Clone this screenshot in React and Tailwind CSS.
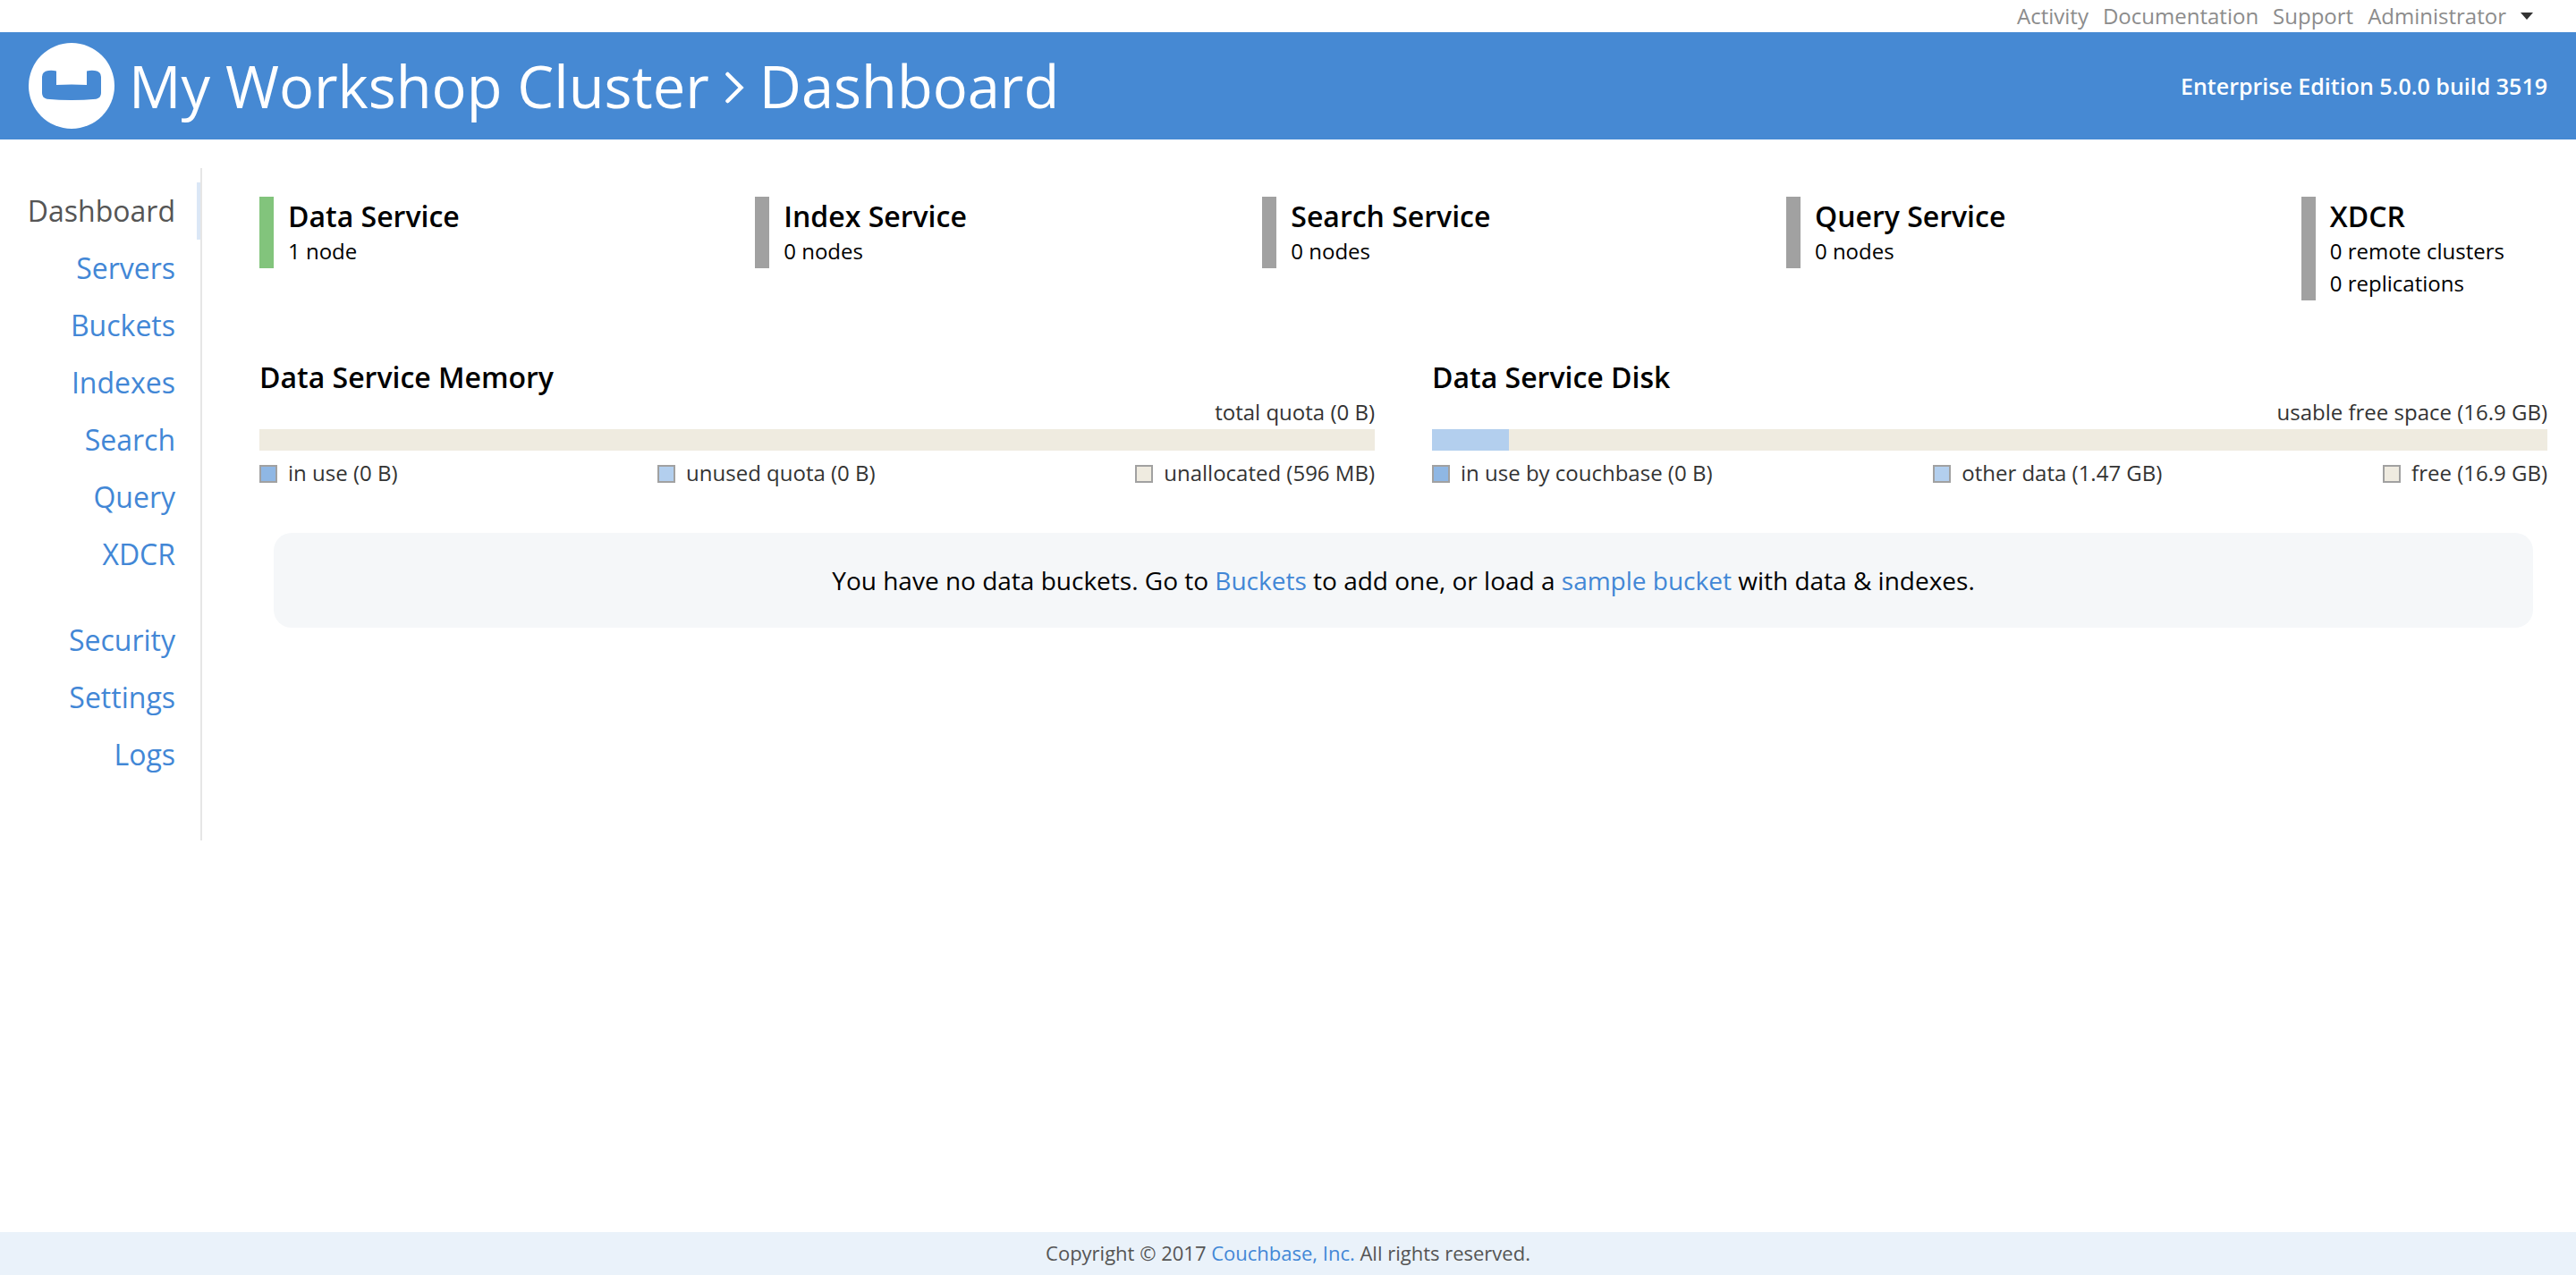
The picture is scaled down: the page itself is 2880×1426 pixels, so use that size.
const linkCls = "text-[#4287d6] hover:underline";

const topLinks = ["Activity", "Documentation", "Support"];
const navMain = ["Dashboard", "Servers", "Buckets", "Indexes", "Search", "Query", "XDCR"];
const navAdmin = ["Security", "Settings", "Logs"];

const services = [
  { name: "Data Service", lines: ["1 node"], active: true },
  { name: "Index Service", lines: ["0 nodes"] },
  { name: "Search Service", lines: ["0 nodes"] },
  { name: "Query Service", lines: ["0 nodes"] },
  { name: "XDCR", lines: ["0 remote clusters", "0 replications"] },
];

const usage = [
  {
    title: "Data Service Memory",
    total: "total quota (0 B)",
    percent: 0,
    legend: ["in use (0 B)", "unused quota (0 B)", "unallocated (596 MB)"],
  },
  {
    title: "Data Service Disk",
    total: "usable free space (16.9 GB)",
    percent: 6.9,
    legend: ["in use by couchbase (0 B)", "other data (1.47 GB)", "free (16.9 GB)"],
  },
];

const swatches = ["bg-[#8fb7e4]", "bg-[#b3cfee]", "bg-[#efebe0]"];

function Logo() {
  return (
    <svg viewBox="0 0 96 96" className="size-24" role="img" aria-label="Couchbase">
      <circle cx="48" cy="48" r="48" fill="#fff" />
      <path
        d="M22 31Q27 30.6 31 31.4V47Q48 46 65 47V31.4Q69 30.6 74 31Q81 32 81 38V56Q81 61.500 75.500 62.700Q48 65.300 20.500 62.700Q15 61.500 15 56V38Q15 32 22 31Z"
        fill="#4689d3"
      />
    </svg>
  );
}

function NavItem({ label }) {
  const active = label === "Dashboard";
  return (
    <li>
      <a
        href={"#" + label.toLowerCase()}
        aria-current={active ? "page" : undefined}
        className={
          "block border-r-4 pr-6 text-right text-[32px] leading-[64px] " +
          (active ? "border-[#dbe7f6] text-[#555555]" : "border-transparent text-[#4287d6]")
        }
      >
        {label}
      </a>
    </li>
  );
}

function Service({ name, lines, active }) {
  return (
    <section className={"border-l-16 pl-4 " + (active ? "border-[#82c47c]" : "border-[#a1a1a1]")}>
      <h2 className="text-[32px] leading-[44px] font-semibold">{name}</h2>
      {lines.map((l) => (
        <p key={l} className="pb-0.5 text-2xl leading-[34px]">{l}</p>
      ))}
    </section>
  );
}

function Usage({ title, total, percent, legend }) {
  return (
    <section className="flex-1 text-2xl leading-[34px] text-[#333333]">
      <h2 className="text-[32px] leading-[44px] font-semibold text-black">{title}</h2>
      <p className="pb-0.5 text-right">{total}</p>
      <div className="h-6 bg-[#efebe0]">
        <div className="h-6 bg-[#b3cfee]" style={{ width: percent + "%" }} />
      </div>
      <ul className="mt-2 flex justify-between pb-0.5">
        {legend.map((l, i) => (
          <li key={l} className="flex items-start gap-3">
            <span className={"mt-2 size-5 border-2 border-[#a1a1a1] " + swatches[i]} />
            {l}
          </li>
        ))}
      </ul>
    </section>
  );
}

export default function App() {
  return (
    <div className="flex min-h-screen flex-col bg-white font-['Open_Sans',sans-serif] text-black">
      <div className="flex h-9 items-center justify-end gap-4 pr-12 text-2xl leading-[34px] text-[#8c8c8c]">
        {topLinks.map((l) => (
          <a key={l} href={"#" + l.toLowerCase()}>{l}</a>
        ))}
        <button type="button" className="flex items-center gap-4">
          Administrator
          <svg viewBox="0 0 14 8" className="h-2 w-[14px]" fill="#333" aria-hidden="true">
            <path d="M0 0H14L7 8Z" />
          </svg>
        </button>
      </div>

      <header className="flex h-[120px] items-center justify-between bg-[#4689d3] px-8 text-white">
        <div className="flex items-center gap-4">
          <Logo />
          <h1 className="flex items-center gap-4 text-[65px] leading-[96px]">
            My Workshop Cluster
            <svg viewBox="0 0 24 36" className="mt-1 h-9 w-6" fill="none" stroke="#fff" strokeWidth="4.500" strokeLinecap="round" aria-hidden="true">
              <path d="M4.500 3L19.500 18L4.500 33" />
            </svg>
            Dashboard
          </h1>
        </div>
        <p className="text-[25px] leading-9 font-semibold">Enterprise Edition 5.0.0 build 3519</p>
      </header>

      <div className="flex flex-1 items-start pt-8">
        <nav className="w-[226px] border-r-2 border-[#e6e6e6] pt-4 pb-16">
          <ul>
            {navMain.map((l) => <NavItem key={l} label={l} />)}
          </ul>
          <ul className="mt-8">
            {navAdmin.map((l) => <NavItem key={l} label={l} />)}
          </ul>
        </nav>

        <main className="flex-1 pt-8 pr-8 pl-16">
          <div className="flex items-start justify-between pr-12">
            {services.map((s) => <Service key={s.name} {...s} />)}
          </div>
          <div className="mt-16 flex gap-16">
            {usage.map((u) => <Usage key={u.title} {...u} />)}
          </div>
          <p className="mx-4 mt-12 rounded-[20px] bg-[#f5f7f9] py-8 text-center text-[28px] leading-[42px]">
            You have no data buckets. Go to <a href="#buckets" className={linkCls}>Buckets</a> to add one, or load a{" "}
            <a href="#samples" className={linkCls}>sample bucket</a> with data &amp; indexes.
          </p>
        </main>
      </div>

      <footer className="bg-[#eaf2fa] pb-0.5 text-center text-[22px] leading-[46px] text-[#555555]">
        Copyright © 2017 <a href="#couchbase" className={linkCls}>Couchbase, Inc.</a> All rights reserved.
      </footer>
    </div>
  );
}
